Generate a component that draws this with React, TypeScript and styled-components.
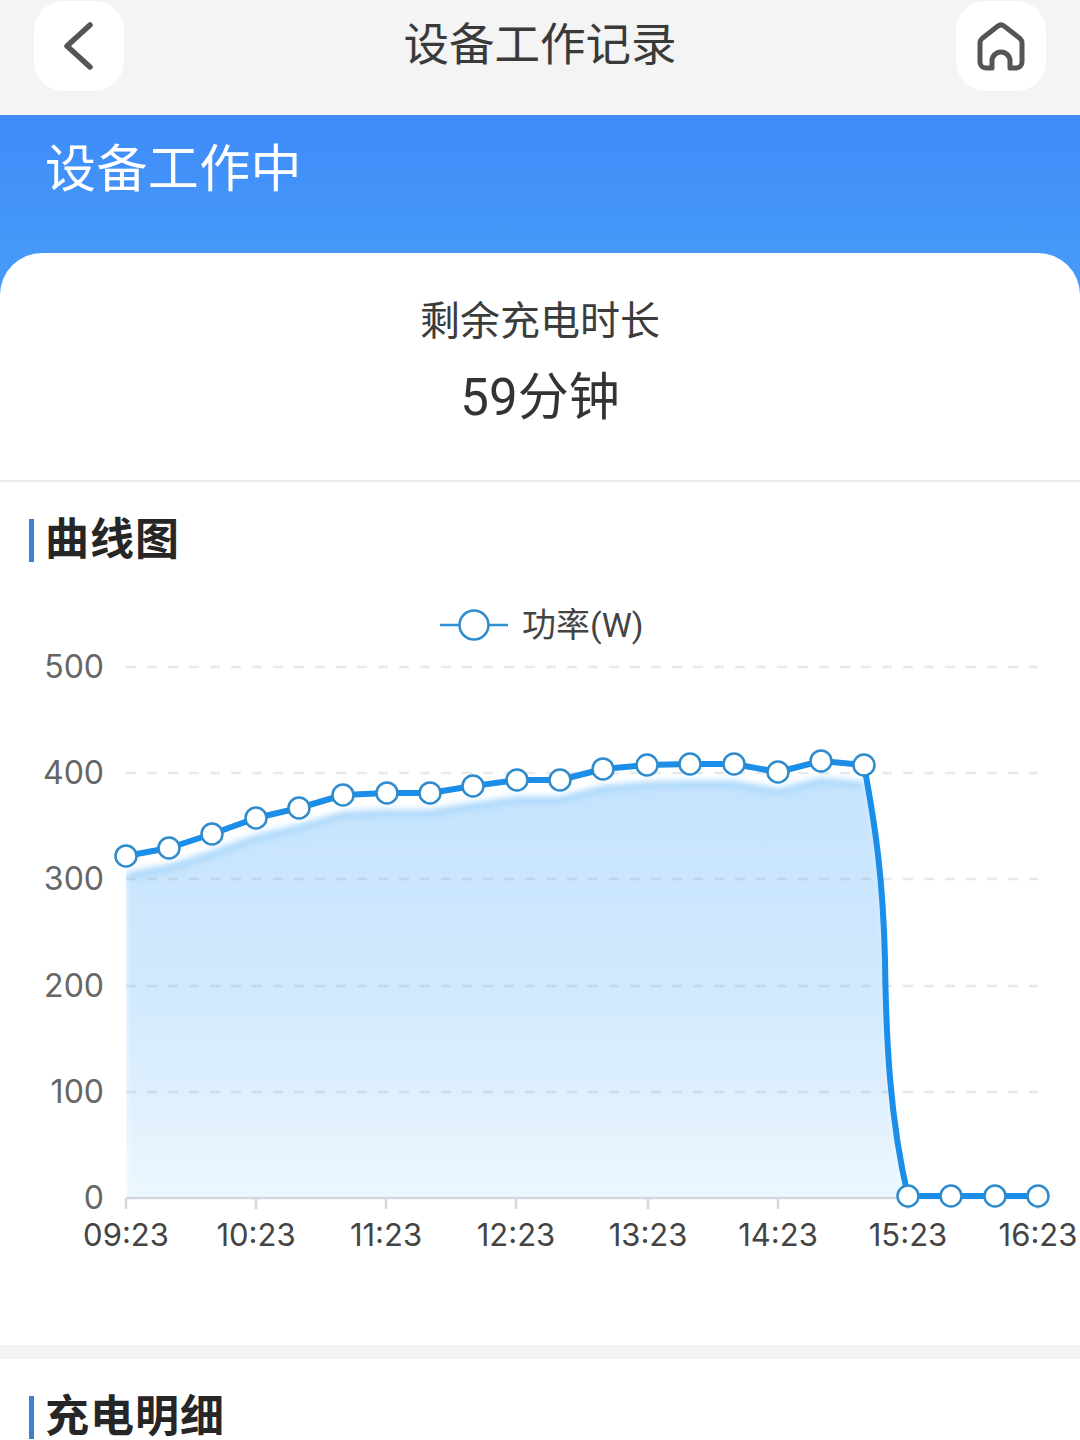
import styled, { createGlobalStyle } from "styled-components";

const CJK = `Roboto, "Noto Sans CJK SC", sans-serif`;
const AXIS = `Inter, "Noto Sans CJK SC", sans-serif`;

const GlobalStyle = createGlobalStyle`
  html, body {
    margin: 0;
    padding: 0;
    background: #fff;
    font-family: ${CJK};
  }
`;

const xs = [126, 169, 212, 256, 299, 343, 387, 430, 473, 517, 560, 603, 647, 690, 734, 778, 821, 864, 908, 951, 995, 1038];
const ys = [856, 848, 834, 818, 808, 795, 793, 793, 786, 780, 780, 769, 765, 764, 764, 772, 761, 765, 1196, 1196, 1196, 1196];
const gridLines = [
  { label: "500", y: 667 },
  { label: "400", y: 773 },
  { label: "300", y: 879 },
  { label: "200", y: 986 },
  { label: "100", y: 1092 },
  { label: "0", y: 1198 },
];
const ticks = [
  { label: "09:23", x: 126 },
  { label: "10:23", x: 256 },
  { label: "11:23", x: 386 },
  { label: "12:23", x: 516 },
  { label: "13:23", x: 648 },
  { label: "14:23", x: 778 },
  { label: "15:23", x: 908 },
  { label: "16:23", x: 1038 },
];

// svg starts at page y 590
const TOP = 590;
const dropCurve = `C 876 ${830 - TOP} 883 ${880 - TOP} 885 ${960 - TOP} C 886 ${1040 - TOP} 890 ${1120 - TOP} 908 ${1196 - TOP}`;

const risePath = (dy: number) =>
  xs
    .slice(0, 18)
    .map((x, i) => `${i === 0 ? "M" : "L"} ${x} ${ys[i] - TOP + dy}`)
    .join(" ");

const linePath = `${risePath(0)} ${dropCurve} L 1038 ${1196 - TOP}`;
const areaPath = `${risePath(24)} L 864 ${775 - TOP} ${dropCurve} L 908 ${1200 - TOP} L 126 ${1200 - TOP} Z`;

const App = () => {
  return (
    <Page>
      <GlobalStyle />
      <TopBar>
        <IconButton>
          <svg width="90" height="90" viewBox="0 0 90 90" fill="none">
            <path d="M56 24 L33 45 L56 66" stroke="#555" strokeWidth="5.5" strokeLinecap="round" strokeLinejoin="round" />
          </svg>
        </IconButton>
        <PageTitle>设备工作记录</PageTitle>
        <IconButton>
          <svg width="90" height="90" viewBox="0 0 90 90" fill="none">
            <path
              d="M36 67 H30 a6 6 0 0 1 -6 -6 V42 a6 6 0 0 1 2 -4.5 L42 25 a5 5 0 0 1 6 0 L64 37.5 a6 6 0 0 1 2 4.5 V61 a6 6 0 0 1 -6 6 H54 V60 a9 9 0 0 0 -18 0 Z"
              stroke="#555"
              strokeWidth="5"
              strokeLinejoin="round"
            />
          </svg>
        </IconButton>
      </TopBar>

      <Hero>
        <HeroTitle>设备工作中</HeroTitle>
        <RemainCard>
          <RemainLabel>剩余充电时长</RemainLabel>
          <RemainValue>59分钟</RemainValue>
        </RemainCard>
      </Hero>

      <ChartSection>
        <SectionTitle>曲线图</SectionTitle>
        <Legend>
          <svg width="68" height="34" viewBox="0 0 68 34" fill="none">
            <line x1="0" y1="17" x2="68" y2="17" stroke="#2f90d6" strokeWidth="2.5" />
            <circle cx="34" cy="17" r="14.5" fill="#fff" stroke="#2f8cce" strokeWidth="2.5" />
          </svg>
          <LegendText>功率(W)</LegendText>
        </Legend>
        <ChartSvg width="1080" height="680" viewBox="0 0 1080 680" fill="none">
          <defs>
            <linearGradient id="areaFill" x1="0" y1="0" x2="0" y2="1">
              <stop offset="0" stopColor="#c6e3fd" />
              <stop offset="0.5" stopColor="#d0e9fe" />
              <stop offset="1" stopColor="#edf7fe" />
            </linearGradient>
            <clipPath id="plotClip">
              <rect x="126" y="0" width="920" height={1197 - TOP} />
            </clipPath>
            <filter id="soft" x="-5%" y="-5%" width="110%" height="110%">
              <feGaussianBlur stdDeviation="3" />
            </filter>
            <filter id="softBand" x="-5%" y="-20%" width="110%" height="140%">
              <feGaussianBlur stdDeviation="3.5" />
            </filter>
          </defs>

          <g clipPath="url(#plotClip)">
            <path d={areaPath} fill="url(#areaFill)" filter="url(#soft)" />
            <path d={risePath(21)} stroke="#a0d3fb" strokeWidth="8" filter="url(#softBand)" />
          </g>

          {gridLines.slice(0, 5).map((g) => (
            <line key={g.y} x1="126" x2="1038" y1={g.y - TOP} y2={g.y - TOP} stroke="#9aa4b0" strokeOpacity="0.24" strokeWidth="2.5" strokeDasharray="10 11" />
          ))}
          {gridLines.map((g) => (
            <YLabel key={g.label} x="104" y={g.y - TOP + 11}>
              {g.label}
            </YLabel>
          ))}

          <line x1="126" x2="1038" y1={1198 - TOP} y2={1198 - TOP} stroke="#d3d8de" strokeWidth="2.5" />
          {ticks.map((t) => (
            <g key={t.label}>
              <line x1={t.x} x2={t.x} y1={1198 - TOP} y2={1209 - TOP} stroke="#d3d8de" strokeWidth="2.5" />
              <XLabel x={t.x} y={1246 - TOP}>
                {t.label}
              </XLabel>
            </g>
          ))}

          <path d={linePath} stroke="#1a8ee9" strokeWidth="6" strokeLinejoin="round" />
          {xs.map((x, i) => (
            <circle key={x} cx={x} cy={ys[i] - TOP} r="10.5" fill="#fff" stroke="#2f8bcb" strokeWidth="2.5" />
          ))}
        </ChartSvg>
      </ChartSection>

      <Divider />

      <DetailSection>
        <SectionTitle>充电明细</SectionTitle>
      </DetailSection>
    </Page>
  );
};

export default App;

const Page = styled.div`
  width: 1080px;
  height: 1440px;
  overflow: hidden;
  background: #fff;
`;

const TopBar = styled.div`
  height: 115px;
  box-sizing: border-box;
  padding: 1px 34px 0;
  background: #f4f4f4;
  display: flex;
  justify-content: space-between;
  align-items: flex-start;
`;

const IconButton = styled.div`
  width: 90px;
  height: 90px;
  border-radius: 30px;
  background: #fff;
  display: flex;
  align-items: center;
  justify-content: center;
`;

const PageTitle = styled.div`
  font-size: 45.5px;
  line-height: 90px;
  color: #3a3a3a;
`;

const Hero = styled.div`
  background: linear-gradient(180deg, #3f8bf9 0, #4699f8 140px);
  padding-top: 24px;
`;

const HeroTitle = styled.div`
  height: 114px;
  padding-left: 45px;
  font-size: 51px;
  letter-spacing: 0.4px;
  line-height: 62px;
  color: #fff;
`;

const RemainCard = styled.div`
  height: 229px;
  box-sizing: border-box;
  background: #fff;
  border-radius: 42px 42px 0 0;
  border-bottom: 2px solid #ececec;
  padding-top: 42px;
  text-align: center;
`;

const RemainLabel = styled.div`
  font-size: 40px;
  line-height: 54px;
  color: #3c3c3c;
`;

const RemainValue = styled.div`
  margin-top: 18px;
  font-size: 51px;
  line-height: 62px;
  color: #333;
`;

const ChartSection = styled.div`
  height: 863px;
  box-sizing: border-box;
  padding-top: 37px;
`;

const SectionTitle = styled.div`
  margin-left: 29px;
  padding-left: 11px;
  height: 43px;
  border-left: 5px solid #3d7fd3;
  font-size: 44px;
  letter-spacing: 1px;
  line-height: 43px;
  font-weight: 700;
  color: #262626;
`;

const Legend = styled.div`
  margin: 46px 0 0 440px;
  display: flex;
  align-items: center;
  gap: 14px;
  height: 34px;
`;

const LegendText = styled.span`
  font-size: 34px;
  line-height: 34px;
  color: #444;
`;

const ChartSvg = styled.svg`
  display: block;
  margin-top: -52px;
`;

const YLabel = styled.text`
  font-family: ${AXIS};
  font-size: 32px;
  fill: #666;
  text-anchor: end;
`;

const XLabel = styled.text`
  font-family: ${AXIS};
  font-size: 31px;
  fill: #444;
  text-anchor: middle;
`;

const Divider = styled.div`
  height: 14px;
  background: #f4f4f4;
`;

const DetailSection = styled.div`
  padding-top: 37px;
`;
